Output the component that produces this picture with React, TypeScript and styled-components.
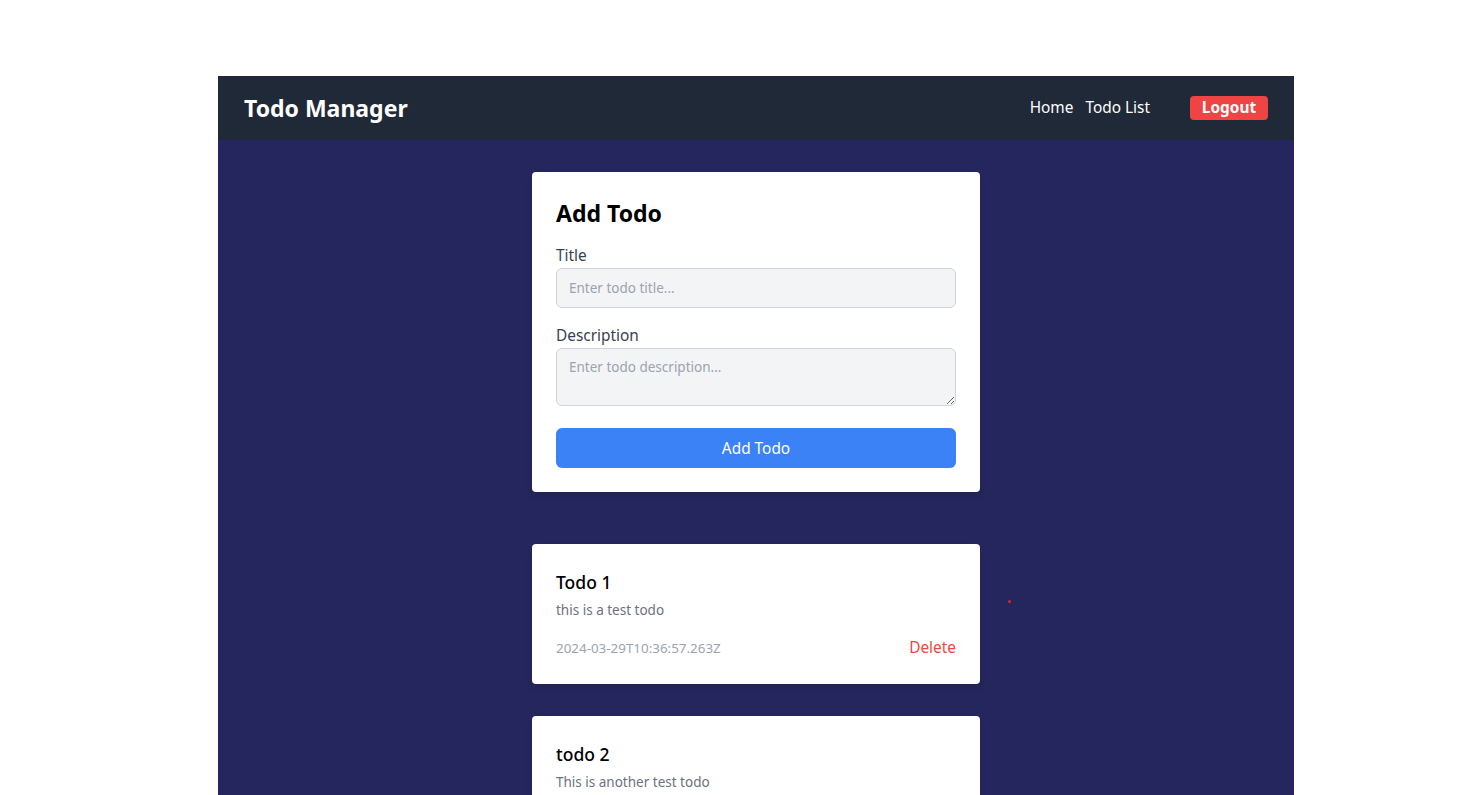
import styled, { createGlobalStyle } from "styled-components";

const GlobalStyle = createGlobalStyle`
  html, body {
    margin: 0;
    padding: 0;
    background: #ffffff;
    font-family: "Noto Sans", "Open Sans", sans-serif;
  }
  * { box-sizing: border-box; }
`;

const Shell = styled.div`
  width: 1076px;
  margin: 76px 0 0 218px;
  background: #25265e;
  min-height: 719px;
  position: relative;
`;

const Header = styled.header`
  height: 64px;
  background: #1f2937;
  display: flex;
  align-items: center;
  justify-content: space-between;
  padding: 0 26px;
`;

const Brand = styled.h1`
  margin: 0;
  color: #fff;
  font-size: 23px;
  line-height: 32px;
  font-weight: 700;
`;

const Nav = styled.nav`
  display: flex;
  align-items: center;
`;

const NavLink = styled.a`
  color: #fff;
  font-size: 15.4px;
  line-height: 24px;
  margin-right: 12px;
  text-decoration: none;
  &:last-of-type { margin-right: 40px; }
`;

const LogoutButton = styled.button`
  background: #ef4444;
  color: #fff;
  font-family: inherit;
  font-weight: 700;
  font-size: 15.4px;
  line-height: 24px;
  border: none;
  border-radius: 4px;
  padding: 0 10px;
  width: 78px;
`;

const Main = styled.main`
  display: flex;
  flex-direction: column;
  align-items: center;
  padding-top: 32px;
`;

const Card = styled.div<{ $gap?: number }>`
  width: 448px;
  background: #fff;
  border-radius: 4px;
  padding: 24px;
  box-shadow: 0 4px 6px rgba(0, 0, 0, 0.1);
  margin-bottom: ${(p) => p.$gap ?? 0}px;
`;

const FormTitle = styled.h2`
  margin: 0 0 16px;
  font-size: 23px;
  line-height: 32px;
  font-weight: 700;
  color: #000;
  position: relative;
  top: 1px;
`;

const Field = styled.div`
  margin-bottom: 16px;
`;

const Label = styled.label`
  display: block;
  color: #374151;
  font-size: 15.4px;
  line-height: 24px;
`;

const TextInput = styled.input`
  display: block;
  width: 100%;
  height: 40px;
  padding: 0 12px;
  border: 1px solid #d1d5db;
  border-radius: 6px;
  background: #f3f4f6;
  font-family: inherit;
  font-size: 13.5px;
  &::placeholder { color: #9ca3af; }
`;

const TextArea = styled.textarea`
  width: 100%;
  height: 58px;
  padding: 8px 12px;
  border: 1px solid #d1d5db;
  border-radius: 6px;
  background: #f3f4f6;
  font-family: inherit;
  font-size: 13.5px;
  line-height: 20px;
  vertical-align: top;
  margin-bottom: 6px;
  &::placeholder { color: #9ca3af; }
`;

const SubmitButton = styled.button`
  width: 100%;
  height: 40px;
  border: none;
  border-radius: 6px;
  background: #3b82f6;
  color: #fff;
  font-family: inherit;
  font-size: 15.4px;
`;

const TodoTitle = styled.h3`
  margin: 0;
  font-size: 17.5px;
  line-height: 28px;
  font-weight: 500;
  color: #000;
`;

const TodoText = styled.p`
  margin: 4px 0 0;
  font-size: 13.5px;
  line-height: 20px;
  color: #6b7280;
`;

const TodoFooter = styled.div`
  display: flex;
  justify-content: space-between;
  align-items: center;
  margin-top: 16px;
`;

const Stamp = styled.span`
  font-size: 13.4px;
  line-height: 24px;
  color: #9ca3af;
`;

const DeleteLink = styled.button`
  background: none;
  border: none;
  padding: 0;
  color: #ef4444;
  font-family: inherit;
  font-size: 15.4px;
  line-height: 24px;
`;

const Dot = styled.span`
  position: absolute;
  left: 790px;
  top: 524px;
  width: 3px;
  height: 3px;
  border-radius: 50%;
  background: #e02424;
`;

const todos = [
  { title: "Todo 1", text: "this is a test todo", date: "2024-03-29T10:36:57.263Z" },
  { title: "todo 2", text: "This is another test todo", date: "2024-03-29T10:41:12.518Z" },
];

export default function App() {
  return (
    <>
      <GlobalStyle />
      <Shell>
        <Header>
          <Brand>Todo Manager</Brand>
          <Nav>
            <NavLink href="#">Home</NavLink>
            <NavLink href="#">Todo List</NavLink>
            <LogoutButton>Logout</LogoutButton>
          </Nav>
        </Header>
        <Main>
          <Card $gap={52}>
            <FormTitle>Add Todo</FormTitle>
            <Field>
              <Label>Title</Label>
              <TextInput placeholder="Enter todo title..." />
            </Field>
            <Field>
              <Label>Description</Label>
              <TextArea placeholder="Enter todo description..." />
            </Field>
            <SubmitButton>Add Todo</SubmitButton>
          </Card>
          {todos.map((t) => (
            <Card key={t.title} $gap={32}>
              <TodoTitle>{t.title}</TodoTitle>
              <TodoText>{t.text}</TodoText>
              <TodoFooter>
                <Stamp>{t.date}</Stamp>
                <DeleteLink>Delete</DeleteLink>
              </TodoFooter>
            </Card>
          ))}
        </Main>
        <Dot />
      </Shell>
    </>
  );
}
